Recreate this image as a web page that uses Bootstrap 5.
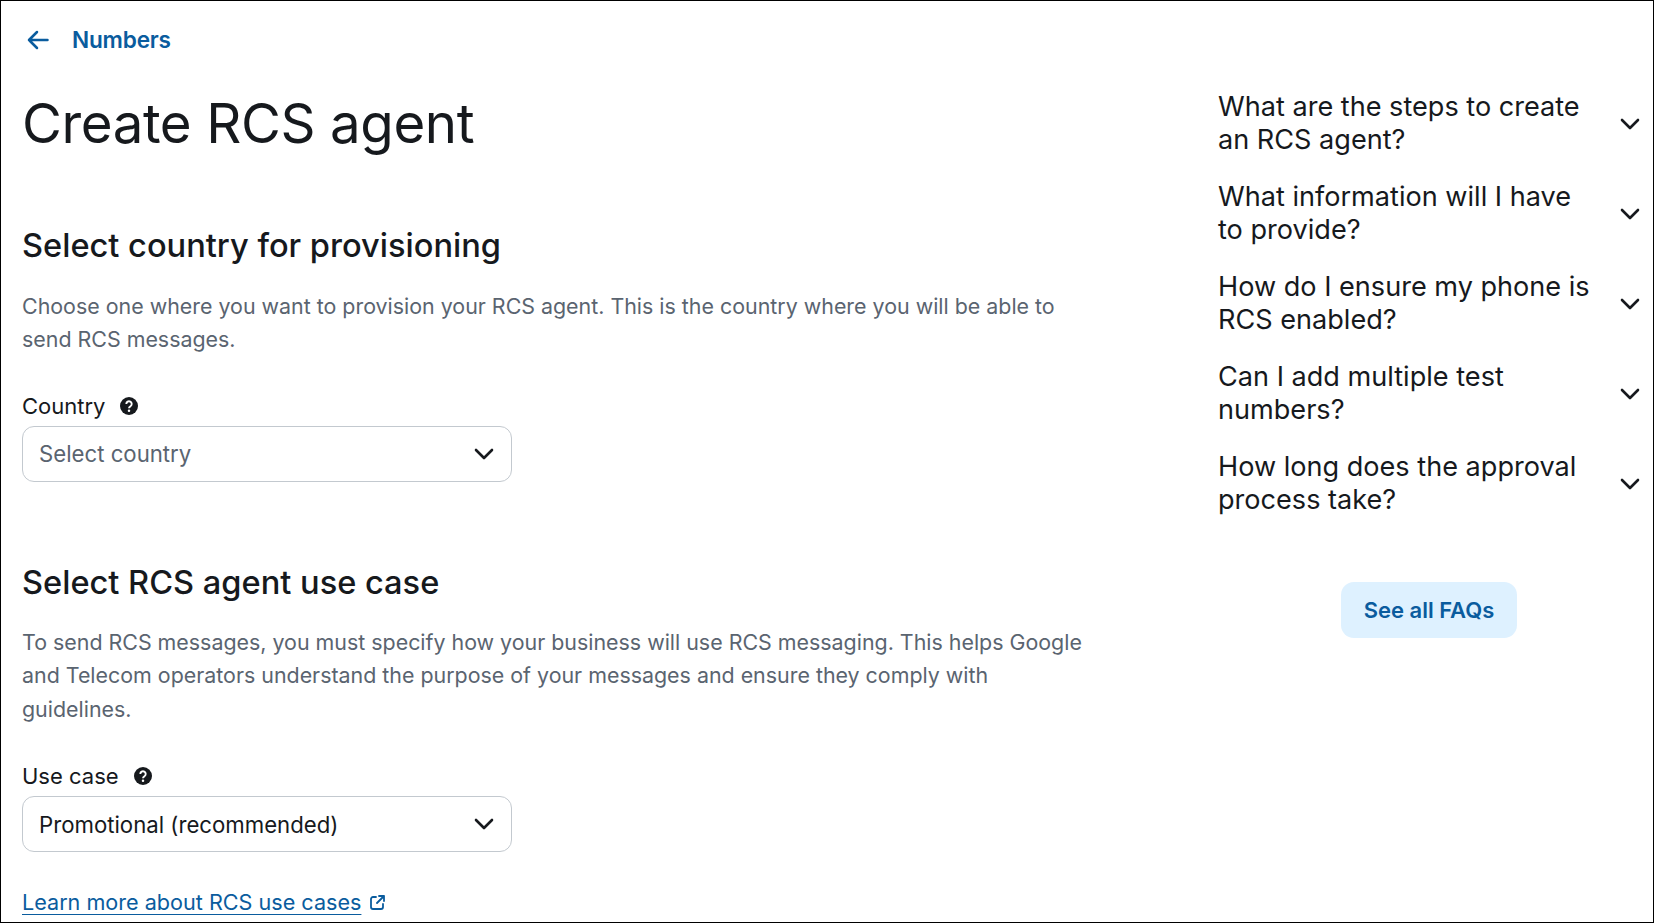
<!DOCTYPE html>
<html lang="en">
<head>
<meta charset="utf-8">
<title>Create RCS agent</title>
<link href="https://cdn.jsdelivr.net/npm/bootstrap@5.3.0/dist/css/bootstrap.min.css" rel="stylesheet">
<style>
html,body{height:100%;overflow:hidden}
body{background:#fff;font-family:Inter,"Liberation Sans",sans-serif;color:#16191d}
.frame{height:923px;border:1px solid #000;padding:0 13px 0 21px;overflow:hidden}
.back-link{color:#0a5c9e;font-size:22.6px;font-weight:600;text-decoration:none;letter-spacing:-.2px;gap:23px;height:40px;margin:19px 0 0 5px}
.page-title{font-size:54.6px;font-weight:400;line-height:62px;margin:32px 0 0;letter-spacing:-.4px}
.sec-title{font-size:32.6px;font-weight:450;line-height:40px;margin:0}
.sec-one{margin-top:71px}
.sec-two{margin-top:80px}
.sec-text{font-size:21.4px;line-height:33.3px;color:#5a6470;margin:24.5px 0 0;max-width:1075px}
.fld-label{font-size:22px;line-height:28px;gap:15px;margin:0 0 6px}
.fld-one{margin-top:35.5px}
.fld-two{margin-top:36.5px}
.pick{width:490px;height:56px;border:1px solid #c3c9cf;border-radius:12px;padding:0 17px 0 16px;font-size:22.2px}
.pick.empty{color:#5a6470}
.more-link{color:#0a5c9e;font-size:21.6px;margin-top:36px;gap:9px;line-height:28px}
.more-link a{color:inherit;text-underline-offset:4px;text-decoration-thickness:1px}
.faq-col{width:422px;margin:78px 0 0 0}
.faq-item{min-height:90px;gap:12px}
.faq-q{font-size:27.1px;line-height:33px;font-weight:400;margin:0 0 2px;max-width:372px}
.see-btn{background:#def1ff;color:#0a5c9e;font-size:22px;font-weight:600;border-radius:13px;width:176px;height:56px;border:0}
.see-btn:hover{background:#def1ff;color:#0a5c9e}
.see-wrap{margin-top:53px}
.left-col{width:1100px}
</style>
</head>
<body>
<div class="frame d-flex justify-content-between">
  <div class="left-col flex-shrink-0">
    <a href="#" class="back-link d-flex align-items-center">
      <svg width="22" height="20" viewBox="0 0 22 20" fill="none" stroke="#0a5c9e" stroke-width="2.5" stroke-linecap="round" stroke-linejoin="round" aria-hidden="true"><path d="M20.5 10H2M10 2 2 10l8 8"/></svg>
      <span>Numbers</span>
    </a>
    <h1 class="page-title">Create RCS agent</h1>

    <h2 class="sec-title sec-one">Select country for provisioning</h2>
    <p class="sec-text">Choose one where you want to provision your RCS agent. This is the country where you will be able to send RCS messages.</p>
    <div class="fld-label fld-one d-flex align-items-center">
      <span>Country</span>
      <svg width="18" height="18" viewBox="0 0 16 16" aria-hidden="true"><circle cx="8" cy="8" r="8" fill="#16191d"/><path d="M5.6 6.2a2.4 2.4 0 1 1 3.7 2c-.9.6-1.3 1-1.3 1.8" fill="none" stroke="#fff" stroke-width="1.7"/><circle cx="8" cy="12.3" r="1.1" fill="#fff"/></svg>
    </div>
    <div class="pick empty d-flex align-items-center justify-content-between">
      <span>Select country</span>
      <svg width="20" height="12" viewBox="0 0 20 12" fill="none" stroke="#16191d" stroke-width="2.6" stroke-linecap="round" stroke-linejoin="round" aria-hidden="true"><path d="m2 2 8 8 8-8"/></svg>
    </div>

    <h2 class="sec-title sec-two">Select RCS agent use case</h2>
    <p class="sec-text">To send RCS messages, you must specify how your business will use RCS messaging. This helps Google and Telecom operators understand the purpose of your messages and ensure they comply with guidelines.</p>
    <div class="fld-label fld-two d-flex align-items-center">
      <span>Use case</span>
      <svg width="18" height="18" viewBox="0 0 16 16" aria-hidden="true"><circle cx="8" cy="8" r="8" fill="#16191d"/><path d="M5.6 6.2a2.4 2.4 0 1 1 3.7 2c-.9.6-1.3 1-1.3 1.8" fill="none" stroke="#fff" stroke-width="1.7"/><circle cx="8" cy="12.3" r="1.1" fill="#fff"/></svg>
    </div>
    <div class="pick d-flex align-items-center justify-content-between">
      <span>Promotional (recommended)</span>
      <svg width="20" height="12" viewBox="0 0 20 12" fill="none" stroke="#16191d" stroke-width="2.6" stroke-linecap="round" stroke-linejoin="round" aria-hidden="true"><path d="m2 2 8 8 8-8"/></svg>
    </div>
    <div class="more-link d-flex align-items-center">
      <a href="#">Learn more about RCS use cases</a>
      <svg width="15" height="15" viewBox="0 0 15 15" fill="none" stroke="#0a5c9e" stroke-width="1.8" stroke-linecap="round" stroke-linejoin="round" aria-hidden="true"><path d="M6 2H3a2 2 0 0 0-2 2v8a2 2 0 0 0 2 2h8a2 2 0 0 0 2-2V9M9 1h5v5M14 1 7 8"/></svg>
    </div>
  </div>

  <div class="faq-col flex-shrink-0">
    <div class="faq-item d-flex justify-content-between align-items-center"><p class="faq-q">What are the steps to create an RCS agent?</p><svg class="flex-shrink-0" width="20" height="12" viewBox="0 0 20 12" fill="none" stroke="#16191d" stroke-width="2.6" stroke-linecap="round" stroke-linejoin="round" aria-hidden="true"><path d="m2 2 8 8 8-8"/></svg></div>
    <div class="faq-item d-flex justify-content-between align-items-center"><p class="faq-q">What information will I have to provide?</p><svg class="flex-shrink-0" width="20" height="12" viewBox="0 0 20 12" fill="none" stroke="#16191d" stroke-width="2.6" stroke-linecap="round" stroke-linejoin="round" aria-hidden="true"><path d="m2 2 8 8 8-8"/></svg></div>
    <div class="faq-item d-flex justify-content-between align-items-center"><p class="faq-q">How do I ensure my phone is RCS enabled?</p><svg class="flex-shrink-0" width="20" height="12" viewBox="0 0 20 12" fill="none" stroke="#16191d" stroke-width="2.6" stroke-linecap="round" stroke-linejoin="round" aria-hidden="true"><path d="m2 2 8 8 8-8"/></svg></div>
    <div class="faq-item d-flex justify-content-between align-items-center"><p class="faq-q">Can I add multiple test numbers?</p><svg class="flex-shrink-0" width="20" height="12" viewBox="0 0 20 12" fill="none" stroke="#16191d" stroke-width="2.6" stroke-linecap="round" stroke-linejoin="round" aria-hidden="true"><path d="m2 2 8 8 8-8"/></svg></div>
    <div class="faq-item d-flex justify-content-between align-items-center"><p class="faq-q">How long does the approval process take?</p><svg class="flex-shrink-0" width="20" height="12" viewBox="0 0 20 12" fill="none" stroke="#16191d" stroke-width="2.6" stroke-linecap="round" stroke-linejoin="round" aria-hidden="true"><path d="m2 2 8 8 8-8"/></svg></div>
    <div class="text-center see-wrap"><button type="button" class="btn see-btn">See all FAQs</button></div>
  </div>
</div>
<script src="https://cdn.jsdelivr.net/npm/bootstrap@5.3.0/dist/js/bootstrap.bundle.min.js"></script>
</body>
</html>
